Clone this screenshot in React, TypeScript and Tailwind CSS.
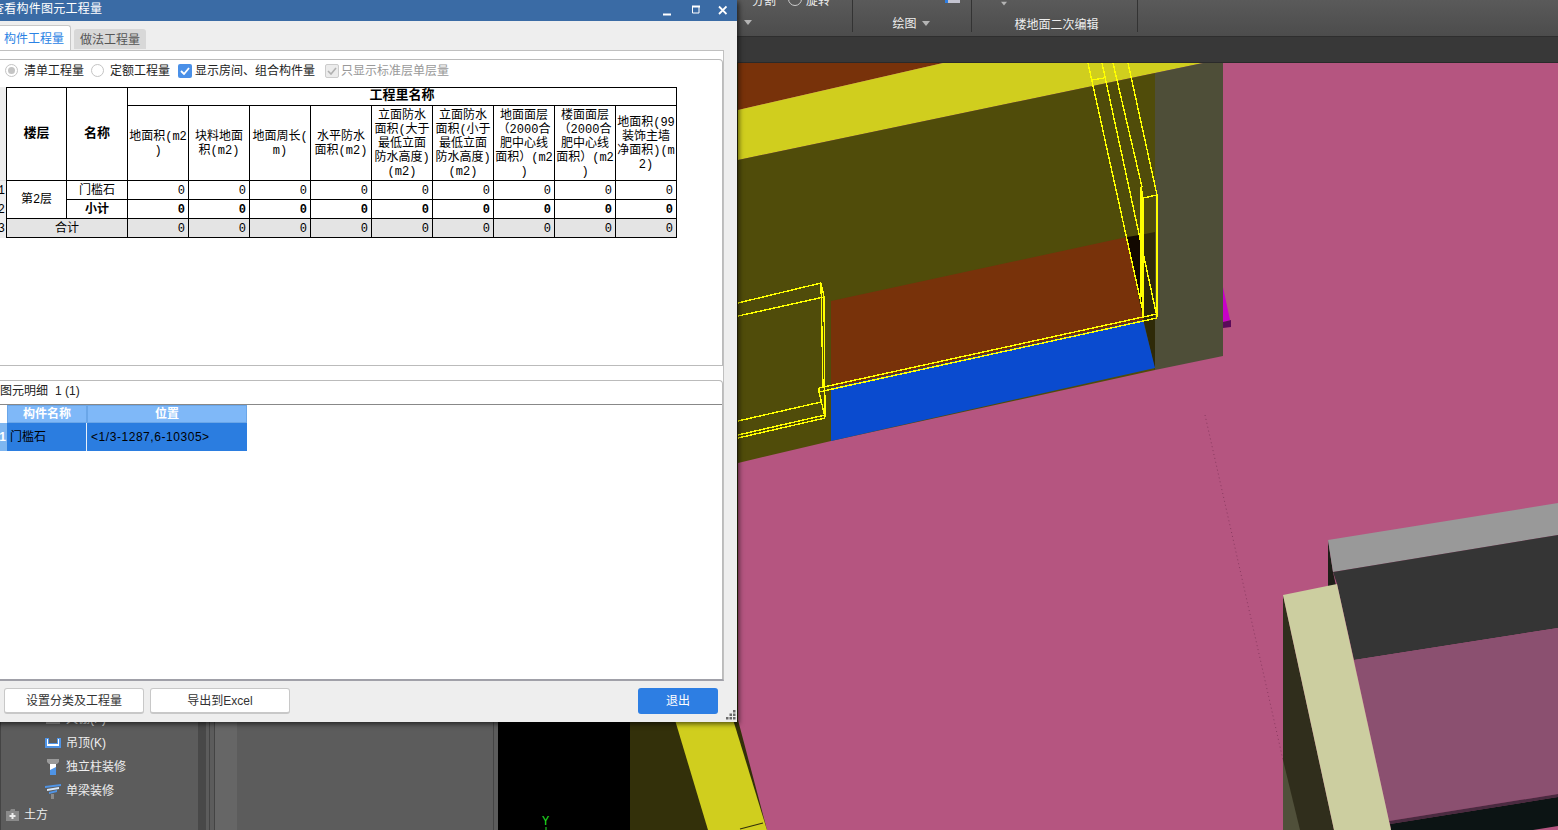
import React from "react";

const sans = "font-['Liberation_Sans','Noto_Sans_CJK_SC',sans-serif]";
const song = "font-['Liberation_Mono','Noto_Sans_CJK_SC',monospace]";

const wires: [number, number, number, number][] = [
  [1088, 63, 1143, 312], [1102, 63, 1157, 317], [1113, 63, 1142, 187], [1128, 63, 1157, 195],
  [1092, 80, 1104, 78], [1143, 198, 1157, 195], [1141, 187, 1143, 198], [1141, 187, 1141, 297],
  [1143, 198, 1143, 317], [1157, 195, 1157, 317], [1143, 317, 1157, 314], [1143, 321, 1157, 318],
  [819, 388, 1143, 317], [819, 392, 1143, 321], [823, 391, 1157, 318],
  [738, 303, 821, 283], [738, 316, 824, 297], [821, 283, 824, 297], [824, 297, 825, 417],
  [821, 283, 823, 388], [738, 421, 821, 402], [738, 435, 825, 415], [738, 438, 825, 418],
  [819, 388, 819, 392], [819, 392, 825, 417],
];

function Scene() {
  return (
    <svg className="block shrink-0" width="1060" height="767" viewBox="498 63 1060 767">
      <rect x="498" y="63" width="1060" height="767" fill="#b55580" />
      <rect x="498" y="63" width="132" height="767" fill="#000000" />
      <polygon points="630,63 738,63 738,720 767,830 630,830" fill="#33300a" />
      <polygon points="669,700 727,700 767,830 708,830" fill="#d0ce1e" />
      <line x1="740" y1="829" x2="763" y2="823" stroke="#33300a" strokeWidth="1.2" />
      <polygon points="738,63 943,63 738,110" fill="#78320a" />
      <polygon points="738,110 943,63 1203,63 1155,73 738,160" fill="#d0ce1e" />
      <polygon points="738,160 1155,73 1155,370 831,441 738,463" fill="#504c0a" />
      <polygon points="831,301 1127,237 1143,320 831,388" fill="#78320a" />
      <polygon points="1127,237 1140,235 1143,318" fill="#120800" />
      <polygon points="1140,235 1155,232 1155,370 1143,318" fill="#2f2a08" />
      <polygon points="831,388 1143,320 1155,368 831,441" fill="#0a4bcf" />
      <polygon points="1223,287 1230,320 1223,322" fill="#c800c8" />
      <polygon points="1223,322 1231,320 1231,327 1223,328" fill="#5a0a5a" />
      <polygon points="1155,73 1203,63 1223,63 1223,356 1155,370" fill="#4e4e38" />
      <g stroke="#ffff00" strokeWidth="1.4" fill="none" shapeRendering="crispEdges">
        {wires.map((w, i) => (
          <line key={i} x1={w[0]} y1={w[1]} x2={w[2]} y2={w[3]} />
        ))}
      </g>
      <line x1="1205" y1="415" x2="1283" y2="760" stroke="#8a3a60" strokeWidth="1" strokeDasharray="1 3" />
      <polygon points="1283,595 1334,830 1283,830" fill="#302e1c" />
      <polygon points="1283,760 1300,830 1283,830" fill="#50503a" />
      <polygon points="1328,540 1333,572 1337,590 1328,590" fill="#1e1e18" />
      <polygon points="1328,540 1558,503 1558,535 1333,572" fill="#999999" />
      <polygon points="1333,572 1558,535 1558,628 1354,660 1337,584" fill="#353535" />
      <polygon points="1354,660 1558,628 1558,794 1389,821" fill="#8b5070" />
      <polygon points="1389,821 1558,794 1558,797 1390,824" fill="#4a2a40" />
      <polygon points="1390,824 1558,797 1558,826 1533,830 1391,830" fill="#0c1414" />
      <polygon points="1283,595 1337,584 1391,830 1334,830" fill="#cccea0" />
      <text x="542" y="825" fill="#22e022" fontSize="12" fontFamily="Liberation Mono, monospace">Y</text>
      <line x1="546" y1="827" x2="546" y2="830" stroke="#22e022" />
    </svg>
  );
}

function TreeRow({ icon, label, indent = true }: { icon: React.ReactNode; label: string; indent?: boolean }) {
  return (
    <div className={`flex h-[24px] items-center ${indent ? "gap-[6px] pl-[44px]" : "gap-[5px] pl-[3px]"}`}>
      <span className="flex w-[16px] justify-center">{icon}</span>
      <span className={`${sans} -ml-px text-[12px] text-[#eeeeee]`}>{label}</span>
    </div>
  );
}

function LeftPanel() {
  return (
    <div className="flex h-full w-[498px] shrink-0 bg-[#5c5c5c]">
      <div className="flex h-full w-[198px] shrink-0 flex-col justify-end border-l border-[#444444] pb-[3px]">
        <TreeRow label="天棚(P)" icon={<span className="block h-[10px] w-[14px] bg-[#9a9a9a]" />} />
        <TreeRow
          label="吊顶(K)"
          icon={
            <svg width="16" height="10" viewBox="0 0 16 10">
              <path d="M0 0h4v5h8V0h4v10H0z" fill="#4f94e6" />
              <path d="M2 1v7h12V1h-1v5H3V1z" fill="#ffffff" />
            </svg>
          }
        />
        <TreeRow
          label="独立柱装修"
          icon={
            <svg width="12" height="16" viewBox="0 0 12 16">
              <path d="M0 0h12v3l-2 2H2L0 3z" fill="#9a9a9a" />
              <path d="M3 5h6v11H3z" fill="#ffffff" />
              <path d="M3 11l6-3v8H3z" fill="#4f94e6" />
            </svg>
          }
        />
        <TreeRow
          label="单梁装修"
          icon={
            <svg width="16" height="15" viewBox="0 0 16 15">
              <path d="M0 2l16-2v2L0 4z" fill="#4f94e6" />
              <path d="M2 5l12-2v2L2 7z" fill="#d8e8fa" />
              <path d="M4 8l8-2v2L4 10z" fill="#4f94e6" />
              <path d="M6 10h3v5H6z" fill="#8a8a8a" />
            </svg>
          }
        />
        <TreeRow
          indent={false}
          label="土方"
          icon={
            <svg width="13" height="12" viewBox="0 0 13 12">
              <path d="M0 2h4l1-2h4v2h4v10H0z" fill="#8a8a8a" />
              <path d="M5.500 4h2v2h2v2h-2v2h-2V8h-2V6h2z" fill="#eeeeee" />
            </svg>
          }
        />
      </div>
      <div className="h-full w-[8px] shrink-0 bg-[#484848]" />
      <div className="h-full w-[3px] shrink-0" />
      <div className="h-full w-[6px] shrink-0 border-x border-[#444444]" />
      <div className="h-full w-[22px] shrink-0 bg-[#666666]" />
      <div className="h-full w-[257px] shrink-0 border-r border-[#444444]" />
      <div className="h-full flex-1" />
    </div>
  );
}

function Caret() {
  return <span className="inline-block h-0 w-0 border-x-[4px] border-t-[5px] border-x-transparent border-t-[#b4b4b4]" />;
}

function Ribbon() {
  return (
    <div className={`${sans} relative flex h-[37px] shrink-0 overflow-hidden border-b border-[#2e2e2e] bg-gradient-to-b from-[#5a5a5a] to-[#4c4c4c] text-[12px] text-[#eeeeee]`}>
      <div className="relative mb-[4px] w-[853px] shrink-0 border-r border-[#333333]">
        <span className="absolute left-[752px] top-[-8px] text-[12px]">分割</span>
        <span className="absolute left-[788px] top-[-8px] h-[14px] w-[14px] rounded-full border border-[#cccccc]" />
        <span className="absolute left-[806px] top-[-8px] text-[12px]">旋转</span>
        <span className="absolute left-[744px] top-[20px] flex"><Caret /></span>
      </div>
      <div className="relative mb-[4px] flex w-[119px] shrink-0 items-start justify-center gap-[5px] border-r border-[#333333] pr-[2px] pt-[15px]">
        <span className="absolute left-[92px] top-0 h-[3px] w-[15px] bg-[#c4c4d0]" />
        <span className="absolute left-[92px] top-0 h-[3px] w-[3px] bg-[#2d7ee3]" />
        <span>绘图</span>
        <span className="mt-[6px] flex"><Caret /></span>
      </div>
      <div className="relative mb-[4px] flex w-[166px] shrink-0 items-start justify-center border-r border-[#333333] pl-[4px] pt-[16px]">
        <span className="absolute left-[28px] top-[1px] flex scale-75"><Caret /></span>
        <span>楼地面二次编辑</span>
      </div>
      <div className="flex-1" />
    </div>
  );
}

const columns: React.ReactNode[] = [
  <>地面积(m2<br />)</>,
  <>块料地面<br />积(m2)</>,
  <>地面周长(<br />m)</>,
  <>水平防水<br />面积(m2)</>,
  <>立面防水<br />面积(大于<br />最低立面<br />防水高度)<br />(m2)</>,
  <>立面防水<br />面积(小于<br />最低立面<br />防水高度)<br />(m2)</>,
  <>地面面层<br />（2000合<br />肥中心线<br />面积）(m2<br />)</>,
  <>楼面面层<br />（2000合<br />肥中心线<br />面积）(m2<br />)</>,
  <>地面积(99<br />装饰主墙<br />净面积)(m<br />2)</>,
];

const cell = "border-r border-b border-black p-0 text-center align-middle";
const body = "border-r border-b border-black p-0 pt-[1px] text-center align-middle";
const num = "border-r border-b border-black p-0 pr-[3px] pt-[1px] text-right align-middle";

function QuantityTable() {
  const zeros = Array.from({ length: 9 });
  return (
    <table className={`${song} w-[685px] table-fixed border-separate border-spacing-0 text-[12px] leading-[14px] text-black`}>
      <colgroup>
        <col className="w-[14px]" />
        {Array.from({ length: 11 }).map((_, i) => (
          <col key={i} className="w-[61px]" />
        ))}
      </colgroup>
      <tbody>
        <tr className="h-[19px]">
          <td rowSpan={2} className="border-b border-[#dddddd] bg-[#eeeeee] p-0" />
          <td rowSpan={2} className={`${cell} border-l border-t text-[13px] font-bold`}>楼层</td>
          <td rowSpan={2} className={`${cell} border-t text-[13px] font-bold`}>名称</td>
          <td colSpan={9} className={`${cell} border-t pb-[1px] text-[13px] font-bold`}>工程里名称</td>
        </tr>
        <tr className="h-[75px]">
          {columns.map((c, i) => (
            <td key={i} className={`${body} whitespace-nowrap`}>{c}</td>
          ))}
        </tr>
        <tr className="h-[19px]">
          <td className="bg-[#eeeeee] p-0 pr-[1px] pt-[1px] text-right">1</td>
          <td rowSpan={2} className={`${body} border-l`}>第2层</td>
          <td className={body}>门槛石</td>
          {zeros.map((_, i) => (
            <td key={i} className={num}>0</td>
          ))}
        </tr>
        <tr className="h-[19px] font-bold">
          <td className="bg-[#eeeeee] p-0 pr-[1px] pt-[1px] text-right font-normal">2</td>
          <td className={body}>小计</td>
          {zeros.map((_, i) => (
            <td key={i} className={num}>0</td>
          ))}
        </tr>
        <tr className="h-[19px]">
          <td className="bg-[#eeeeee] p-0 pr-[1px] pt-[1px] text-right">3</td>
          <td colSpan={2} className={`${body} border-l bg-[#e4e4e4]`}>合计</td>
          {zeros.map((_, i) => (
            <td key={i} className={`${num} bg-[#e4e4e4]`}>0</td>
          ))}
        </tr>
      </tbody>
    </table>
  );
}

function Options() {
  return (
    <div className="flex h-[27px] items-center pb-[6px] pl-[13px] text-[12px] text-[#222222]">
      <span className="flex h-[13px] w-[13px] items-center justify-center rounded-full border border-[#c4c4c4]">
        <span className="h-[7px] w-[7px] rounded-full bg-[#c4c4c4]" />
      </span>
      <span className="ml-[6px] w-[60px]">清单工程量</span>
      <span className="ml-[7px] h-[13px] w-[13px] rounded-full border border-[#c4c4c4]" />
      <span className="ml-[6px] w-[60px]">定额工程量</span>
      <span className="ml-[8px] flex h-[14px] w-[14px] items-center justify-center rounded-[2px] bg-[#4a90e8]">
        <svg width="10" height="8" viewBox="0 0 10 8">
          <path d="M1 4l3 3 5-6" fill="none" stroke="#ffffff" strokeWidth="1.8" />
        </svg>
      </span>
      <span className="ml-[3px] w-[120px]">显示房间、组合构件量</span>
      <span className="ml-[10px] flex h-[14px] w-[14px] items-center justify-center rounded-[2px] border border-[#cccccc] bg-[#ececec]">
        <svg width="10" height="8" viewBox="0 0 10 8">
          <path d="M1 4l3 3 5-6" fill="none" stroke="#b0b0b0" strokeWidth="1.6" />
        </svg>
      </span>
      <span className="ml-[2px] text-[#999999]">只显示标准层单层量</span>
    </div>
  );
}

function DetailGrid() {
  return (
    <div className="border-t border-[#888888] pl-[8px] text-[12px]">
      <div className="flex h-[18px] w-[247px]">
        <div className="w-[7px]" />
        <div className="flex w-[80px] items-center justify-center border border-[#6aa6e8] bg-[#7fb8f8] font-bold text-white">构件名称</div>
        <div className="flex w-[160px] items-center justify-center border border-[#6aa6e8] bg-[#7fb8f8] font-bold text-white">位置</div>
      </div>
      <div className="flex h-[28px] w-[247px]">
        <div className="flex w-[7px] items-center justify-end bg-[#7fb6f0] pr-[1px] font-bold text-white">1</div>
        <div className="flex w-[80px] items-center border-r border-[#e8f0fa] bg-[#2b7de0] pl-[3px] text-black">门槛石</div>
        <div className="flex w-[160px] items-center bg-[#2b7de0] pl-[4px] tracking-[0.55px] text-black">&lt;1/3-1287,6-10305&gt;</div>
      </div>
    </div>
  );
}

function Dialog() {
  return (
    <div className={`${sans} absolute left-[-8px] top-0 flex h-[722px] w-[745px] flex-col bg-[#eeeeee] shadow-[2px_2px_5px_rgba(0,0,0,0.6)]`}>
      <div className="flex h-[21px] shrink-0 items-center justify-between bg-[#3a6ba5] pr-[10px] text-white">
        <span className="pb-[3px] text-[12px] tracking-[0.25px]">查看构件图元工程量</span>
        <div className="flex items-center">
          <svg width="64" height="12" viewBox="0 0 64 12" fill="none" stroke="#ffffff">
            <path d="M0 9.500h8" strokeWidth="2" />
            <path d="M29.500 1.500h6.500v6.500h-6.500z" strokeWidth="1" />
            <path d="M29 1.500h8" strokeWidth="2" />
            <path d="M56 1.500l7.500 7.500M63.500 1.500L56 9" strokeWidth="1.800" />
          </svg>
        </div>
      </div>
      <div className="flex h-[29px] shrink-0 items-end pl-[8px] text-[12px]">
        <div className="flex h-[25px] w-[71px] items-center justify-center rounded-tr-[3px] border-r border-t border-[#c8c8c8] bg-white pr-[2px] pt-[2px] text-[#2a82e4]">构件工程量</div>
        <div className="mb-[1px] ml-[3px] flex h-[20px] w-[72px] items-center justify-center rounded-t-[3px] bg-[#d8d8d8] pt-[2px] text-[#555555]">做法工程量</div>
      </div>
      <div className="flex h-[631px] w-[732px] shrink-0 flex-col border-b-2 border-r border-t border-[#c0c0c0] border-b-[#a0a0a8] bg-white">
        <div className="h-[8px] shrink-0" />
        <div className="h-[307px] shrink-0 rounded-tr-[4px] border-b border-r border-t border-[#bbbbbb]">
          <Options />
          <QuantityTable />
        </div>
        <div className="h-[14px] shrink-0" />
        <div className="flex flex-1 flex-col rounded-tr-[4px] border-r border-t border-[#bbbbbb]">
          <div className="flex h-[23px] shrink-0 items-center gap-[7px] pb-[4px] pl-[8px] text-[12px] text-[#222222]">
            <span>图元明细</span>
            <span>1 (1)</span>
          </div>
          <DetailGrid />
        </div>
      </div>
      <div className="relative flex flex-1 items-start pl-[12px] pt-[7px] text-[12px] text-[#333333]">
        <button className="flex h-[26px] w-[140px] items-center justify-center rounded-[3px] border border-b-2 border-[#c8c8c8] bg-white">设置分类及工程量</button>
        <button className="ml-[6px] flex h-[26px] w-[140px] items-center justify-center rounded-[3px] border border-b-2 border-[#c8c8c8] bg-white">导出到Excel</button>
        <button className="ml-[348px] flex h-[26px] w-[80px] items-center justify-center rounded-[3px] bg-[#2d7ee3] text-white">退出</button>
        <svg className="absolute bottom-[2px] right-[1px]" width="10" height="10" viewBox="0 0 10 10" fill="#6a6a6a">
          <rect x="7" y="0" width="2.500" height="2.500" />
          <rect x="3.500" y="3.500" width="2.500" height="2.500" />
          <rect x="7" y="3.500" width="2.500" height="2.500" />
          <rect x="0" y="7" width="2.500" height="2.500" />
          <rect x="3.500" y="7" width="2.500" height="2.500" />
          <rect x="7" y="7" width="2.500" height="2.500" />
        </svg>
      </div>
    </div>
  );
}

export default function App() {
  return (
    <div className="relative flex h-[830px] w-[1558px] flex-col overflow-hidden bg-[#5c5c5c]">
      <Ribbon />
      <div className="h-[26px] shrink-0 border-b border-[#2a2a2a] bg-[#383838]" />
      <div className="flex h-[767px] shrink-0">
        <LeftPanel />
        <Scene />
      </div>
      <Dialog />
    </div>
  );
}
